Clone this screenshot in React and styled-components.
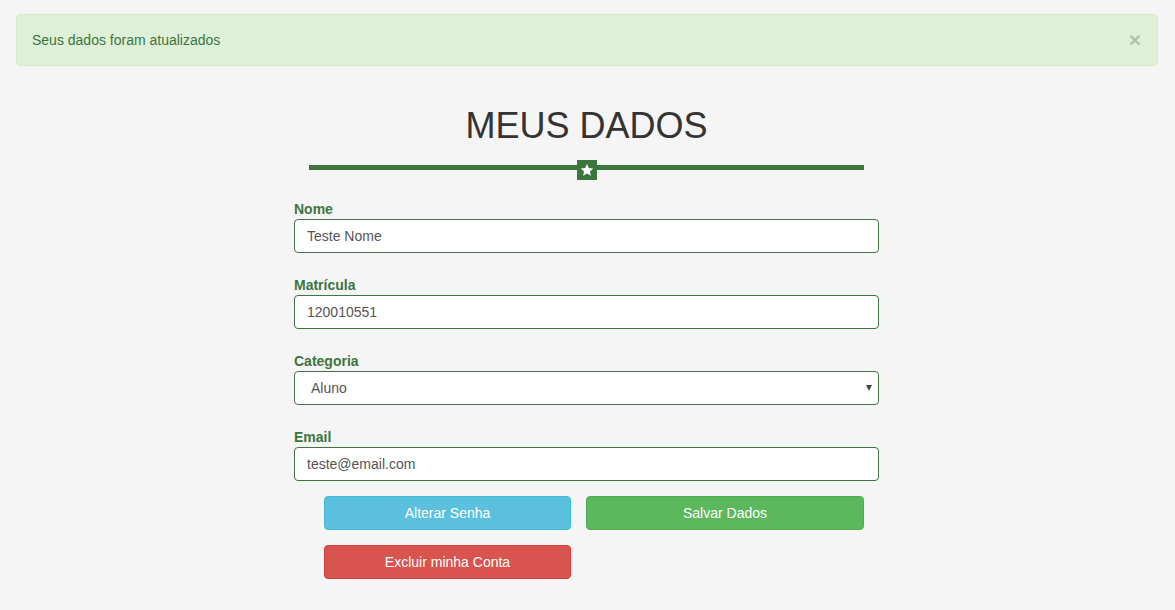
import React from 'react';
import styled, { createGlobalStyle } from 'styled-components';

const GlobalStyle = createGlobalStyle`
  body {
    margin: 0;
    background: #f5f5f5;
    font-family: "Liberation Sans", Arial, sans-serif;
    font-size: 14px;
    line-height: 20px;
    color: #333;
  }
  * { box-sizing: border-box; }
`;

const Page = styled.div`
  padding: 14px 17px 30px 16px;
`;

const Alert = styled.div`
  display: flex;
  align-items: center;
  justify-content: space-between;
  padding: 15px;
  background: #dff0d8;
  border: 1px solid #d6e9c6;
  border-radius: 4px;
  color: #3c763d;
`;

const Close = styled.button`
  border: none;
  background: none;
  padding: 0;
  margin-right: 1px;
  font-family: inherit;
  font-size: 21px;
  font-weight: bold;
  line-height: 20px;
  color: #000;
  opacity: 0.2;
  cursor: pointer;
`;

const Title = styled.h1`
  margin: 40px 0 14px;
  text-align: center;
  font-size: 36px;
  font-weight: 500;
  line-height: 1.1;
  color: #333;
`;

const Form = styled.form`
  width: 585px;
  margin-left: calc(50% - 293px);
`;

const Divider = styled.div`
  display: flex;
  align-items: center;
  margin: 0 15px 19px;
  height: 20px;
`;

const Line = styled.div`
  flex: 1;
  height: 5px;
  margin-top: -5px;
  background: #3c763d;
`;

const StarBox = styled.div`
  width: 20px;
  height: 20px;
  display: flex;
  align-items: center;
  justify-content: center;
  background: #3c763d;
`;

const Group = styled.div`
  margin-bottom: ${(p) => (p.$last ? '15px' : '22px')};
`;

const Label = styled.label`
  display: block;
  font-weight: bold;
  color: #3c763d;
`;

const Input = styled.input`
  display: block;
  width: 100%;
  height: 34px;
  padding: 6px 12px;
  font-family: inherit;
  font-size: 14px;
  color: #555;
  background: #fff;
  border: 1px solid #3c763d;
  border-radius: 4px;
  outline: none;
`;

const SelectWrap = styled.div`
  position: relative;
  &::after {
    content: '';
    position: absolute;
    right: 7px;
    top: 14px;
    border-left: 3.5px solid transparent;
    border-right: 3.5px solid transparent;
    border-top: 6px solid #444;
    pointer-events: none;
  }
`;

const Select = styled.select`
  display: block;
  width: 100%;
  height: 34px;
  padding: 6px 16px;
  font-family: inherit;
  font-size: 14px;
  color: #555;
  background: #fff;
  border: 1px solid #3c763d;
  border-radius: 4px;
  appearance: none;
  outline: none;
`;

const Buttons = styled.div`
  display: grid;
  grid-template-columns: 247px 278px;
  gap: 15px;
  padding-left: 30px;
`;

const colors = {
  info: ['#5bc0de', '#46b8da'],
  success: ['#5cb85c', '#4cae4c'],
  danger: ['#d9534f', '#d43f3a'],
};

const Button = styled.button`
  height: 34px;
  padding: 6px 12px;
  font-family: inherit;
  font-size: 14px;
  color: #fff;
  background: ${(p) => colors[p.$kind][0]};
  border: 1px solid ${(p) => colors[p.$kind][1]};
  border-radius: 4px;
  cursor: pointer;
`;

const Star = () => (
  <svg width="14" height="14" viewBox="0 0 24 24">
    <path
      fill="#fff"
      d="M12 1.5l3.1 7.1 7.7.7-5.8 5.1 1.8 7.6L12 18l-6.8 4 1.8-7.6-5.8-5.1 7.7-.7z"
    />
  </svg>
);

export default function App() {
  return (
    <Page>
      <GlobalStyle />
      <Alert>
        <span>Seus dados foram atualizados</span>
        <Close type="button">×</Close>
      </Alert>
      <Form onSubmit={(e) => e.preventDefault()}>
        <Title>MEUS DADOS</Title>
        <Divider>
          <Line />
          <StarBox>
            <Star />
          </StarBox>
          <Line />
        </Divider>
        <Group>
          <Label>Nome</Label>
          <Input defaultValue="Teste Nome" />
        </Group>
        <Group>
          <Label>Matrícula</Label>
          <Input defaultValue="120010551" />
        </Group>
        <Group>
          <Label>Categoria</Label>
          <SelectWrap>
            <Select defaultValue="aluno">
              <option value="aluno">Aluno</option>
              <option value="professor">Professor</option>
            </Select>
          </SelectWrap>
        </Group>
        <Group $last>
          <Label>Email</Label>
          <Input defaultValue="teste@email.com" />
        </Group>
        <Buttons>
          <Button type="button" $kind="info">Alterar Senha</Button>
          <Button type="submit" $kind="success">Salvar Dados</Button>
          <Button type="button" $kind="danger">Excluir minha Conta</Button>
        </Buttons>
      </Form>
    </Page>
  );
}
